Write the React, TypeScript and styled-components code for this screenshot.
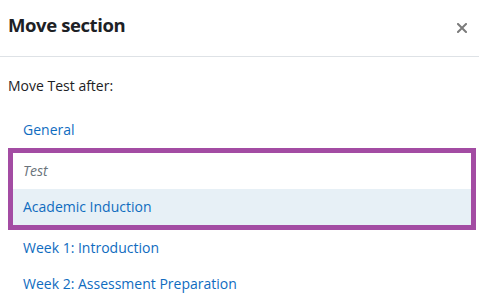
import styled, { createGlobalStyle } from "styled-components"

const GlobalStyle = createGlobalStyle`
html, body {
  margin: 0;
  padding: 0;
  background: #fff;
}
body {
  font-family: "Open Sans", "Noto Sans", sans-serif;
  color: #1d2125;
}
`

const Dialog = styled.div`
width: 479px;
height: 307px;
overflow: hidden;
background: #fff;
`

const Header = styled.div`
display: flex;
align-items: center;
justify-content: space-between;
height: 56px;
padding: 0 12px 0 8px;
border-bottom: 1px solid #dee2e6;
`

const Title = styled.h5`
margin: 0 0 8px 0;
font-size: 18.5px;
font-weight: 700;
letter-spacing: -0.4px;
color: #1d2125;
`

const CloseButton = styled.button`
border: none;
background: none;
padding: 0;
width: 10px;
height: 10px;
display: flex;
cursor: pointer;
`

const Body = styled.div`
padding: 19px 3px 0 8px;
`

const Intro = styled.p`
margin: 0 0 16px 0;
font-size: 14px;
line-height: 20px;
`

const List = styled.ul`
list-style: none;
margin: 0;
padding: 0;
`

const Row = styled.li<{ $current?: boolean; $hover?: boolean }>`
padding: 8px 15px;
line-height: 20px;
font-size: 14px;
color: ${p => (p.$current ? "#6a737b" : "#0f6cbf")};
font-style: ${p => (p.$current ? "italic" : "normal")};
background: ${p => (p.$hover ? "#e7f0f6" : "transparent")};
cursor: ${p => (p.$current ? "default" : "pointer")};
`

const DropTarget = styled.li`
border: 5px solid #a34ca3;
& ${Row} {
  padding-left: 10px;
}
`

const InnerList = styled.ul`
list-style: none;
margin: 0;
padding: 0;
`

const App = () => {
    return(
        <>
        <GlobalStyle />
        <Dialog>
            <Header>
                <Title>Move section</Title>
                <CloseButton aria-label="Close">
                    <svg width="10" height="10" viewBox="0 0 10 10">
                        <path d="M1 1L9 9M9 1L1 9" stroke="#7b7b7b" strokeWidth="2" strokeLinecap="square" />
                    </svg>
                </CloseButton>
            </Header>
            <Body>
                <Intro>Move Test after:</Intro>
                <List>
                    <Row>General</Row>
                    <DropTarget>
                        <InnerList>
                            <Row $current>Test</Row>
                            <Row $hover>Academic Induction</Row>
                        </InnerList>
                    </DropTarget>
                    <Row>Week 1: Introduction</Row>
                    <Row>Week 2: Assessment Preparation</Row>
                </List>
            </Body>
        </Dialog>
        </>
    )
}

export default App
